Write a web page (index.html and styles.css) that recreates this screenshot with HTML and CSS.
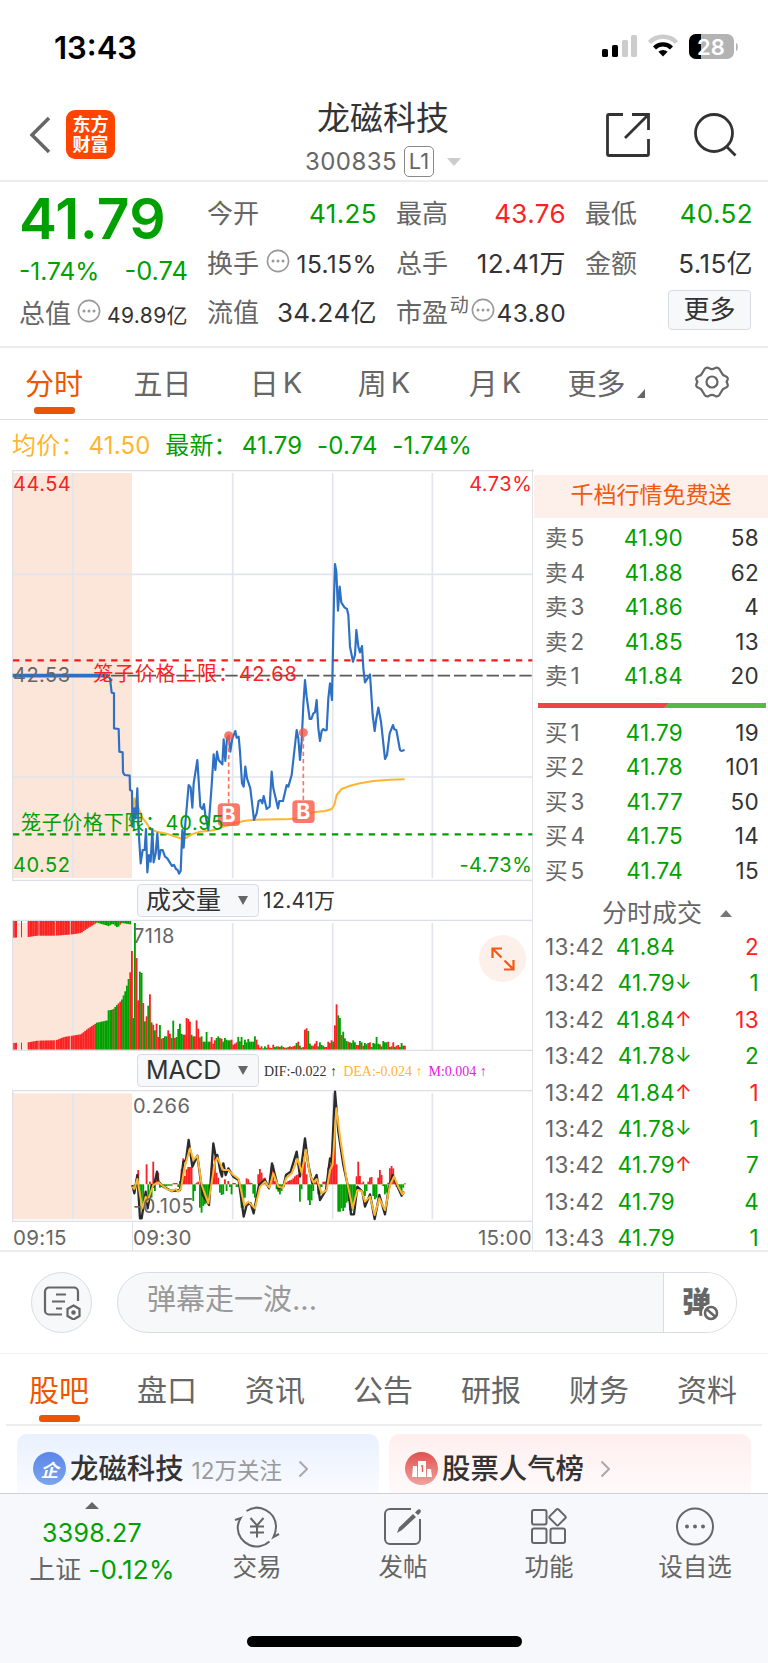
FILE: index.html
```
<!DOCTYPE html>
<html lang="zh-CN">
<head>
  <meta charset="UTF-8">
  <meta name="viewport" content="width=device-width, initial-scale=1.0">
  <title>龙磁科技 300835</title>
  <link rel="stylesheet" href="styles.css">
</head>
<body>
  <!-- Status bar -->
  <div class="status-bar">
    <span class="clock">13:43</span>
    <svg class="status-icons" width="138" height="26" viewBox="0 0 138 26">
      <rect x="2" y="15" width="6" height="8" rx="1.6"/>
      <rect x="12" y="11" width="6" height="12" rx="1.6"/>
      <rect x="22" y="6" width="6" height="17" rx="1.6" fill="#ccc"/>
      <rect x="31" y="1" width="6" height="22" rx="1.6" fill="#ccc"/>
      <path d="M49.500 8.500a19 19 0 0 1 27 0" fill="none" stroke="#ccc" stroke-width="4.500"/>
      <path d="M54.500 14a12 12 0 0 1 17 0" fill="none" stroke="#000" stroke-width="4.200"/>
      <path d="M63 22.500l-4.600-4.700a6.600 6.600 0 0 1 9.200 0z"/>
      <rect x="89" y="0" width="45" height="25" rx="7" fill="#b3b3b3"/>
      <path d="M96 0h5v25h-5a7 7 0 0 1-7-7V7a7 7 0 0 1 7-7z"/>
      <path d="M136 9v8c2.500-1 2.500-7 0-8z" fill="#b3b3b3"/>
      <text x="111" y="20.500" text-anchor="middle" class="battery-text">28</text>
    </svg>
  </div>

  <header class="navbar">
    <div class="nav-left">
      <svg width="24" height="38" viewBox="0 0 24 38" fill="none" stroke="#666" stroke-width="3.500"><path d="M21 2L4 19l17 17"/></svg>
      <div class="app-logo"><span>东方</span><span>财富</span></div>
    </div>
    <div class="stock-title">
      <h1>龙磁科技</h1>
      <p><span>300835</span><span class="level">L1</span><i class="caret-down"></i></p>
    </div>
    <div class="nav-right">
      <svg width="46" height="46" viewBox="0 0 46 46" fill="none" stroke="#333" stroke-width="2.800">
        <path d="M18 2.500H4a1.500 1.500 0 0 0-1.500 1.500v38A1.500 1.500 0 0 0 4 43.500h38a1.500 1.500 0 0 0 1.500-1.500V27M27 2.500h16.500V18M43 3L20 26"/>
      </svg>
      <svg width="46" height="46" viewBox="0 0 46 46" fill="none" stroke="#333" stroke-width="2.800">
        <circle cx="22" cy="21" r="18.500"/><path d="M34.500 34.500l9 9"/>
      </svg>
    </div>
  </header>

  <!-- Quote summary -->
  <section class="quote">
    <div class="main-price">
      <strong>41.79</strong>
      <div class="change"><span>-1.74%</span><span>-0.74</span></div>
      <div class="cell small"><label>总值</label><svg class="dots"><use href="#dots"/></svg><b>49.89亿</b></div>
    </div>
    <div class="col">
      <div class="cell"><label>今开</label><b class="green">41.25</b></div>
      <div class="cell mid"><label>换手</label><svg class="dots"><use href="#dots"/></svg><b>15.15%</b></div>
      <div class="cell"><label>流值</label><b>34.24亿</b></div>
    </div>
    <div class="col">
      <div class="cell"><label>最高</label><b class="red">43.76</b></div>
      <div class="cell"><label>总手</label><b>12.41万</b></div>
      <div class="cell mid"><label>市盈</label><em>动</em><svg class="dots"><use href="#dots"/></svg><b>43.80</b></div>
    </div>
    <div class="col">
      <div class="cell"><label>最低</label><b class="green">40.52</b></div>
      <div class="cell"><label>金额</label><b>5.15亿</b></div>
      <div class="more-wrap"><button class="more-btn">更多</button></div>
    </div>
  </section>

  <svg class="defs">
    <symbol id="dots" viewBox="0 0 24 24">
      <circle cx="12" cy="12" r="10.600" fill="none" stroke="#999" stroke-width="1.600"/>
      <circle cx="7" cy="12" r="1.500" fill="#999"/><circle cx="12" cy="12" r="1.500" fill="#999"/><circle cx="17" cy="12" r="1.500" fill="#999"/>
    </symbol>
  </svg>

  <nav class="period-tabs">
    <a class="active">分时</a>
    <a>五日</a>
    <a>日<span>K</span></a>
    <a>周<span>K</span></a>
    <a>月<span>K</span></a>
    <a class="more">更多<i></i></a>
    <a><svg width="36" height="34" viewBox="0 0 36 34" fill="none" stroke="#666" stroke-width="2.200" stroke-linejoin="round">
      <path d="M10.500 4.200Q12.500 1.500 15 3.200Q18 5.200 21 3.200Q23.500 1.500 25.500 4.200L27.400 7.500Q28.500 10.300 31.500 11.200Q34.600 12.300 33.500 15L32.600 17L33.500 19Q34.600 21.700 31.500 22.800Q28.500 23.700 27.400 26.500L25.500 29.800Q23.500 32.500 21 30.800Q18 28.800 15 30.800Q12.500 32.500 10.500 29.800L8.600 26.500Q7.500 23.700 4.500 22.800Q1.400 21.700 2.500 19L3.400 17L2.500 15Q1.400 12.300 4.500 11.200Q7.500 10.300 8.600 7.500Z"/>
      <circle cx="18" cy="17" r="5.500"/></svg></a>
  </nav>

  <div class="price-info">
    <span class="avg">均价：<b>41.50</b></span><span>最新：<b>41.79</b></span><span>-0.74</span><span>-1.74%</span>
  </div>

  <main class="market">
    <div class="charts">
      <!-- Intraday price -->
      <svg class="price-chart" viewBox="36 12 1566 1236">
        <rect x="39" y="24" width="357" height="1215" fill="#fce6da"/>
        <g class="grid">
          <path d="M218 24V1239M698 24V1239M998 24V1239M1297 24V1239M38 328H1597M38 936H1597"/>
          <path class="frame" d="M38 1248V17H1602M38 1246H1597"/>
        </g>
        <path d="M39 586H1597" stroke="#f01e1e" stroke-width="6.500" stroke-dasharray="19 17.800"/>
        <path d="M39 632H1597" stroke="#5a5a5a" stroke-width="5.500" stroke-dasharray="37 12"/>
        <path d="M39 1108H1597" stroke="#00a000" stroke-width="6.500" stroke-dasharray="19 17.800"/>
        <polyline class="avg-line" points="397,1085 403,1000 412,1020 427,1058 440,1075 450,1092 470,1100 500,1106 525,1115 545,1121 560,1118 575,1108 600,1100 640,1096 680,1082 730,1068 765,1064 870,1062 900,1060 920,1048 940,1042 975,1038 995,1032 1003,1020 1010,990 1025,972 1045,964 1080,955 1120,948 1170,944 1214,943"/>
        <path d="M38 632H325" stroke="#2d70c4" stroke-width="11"/>
        <polyline class="price-line" points="320,632 330,640 335,683 342,685 342,790 356,792 358,860 368,862 369,922 374,930 389,932 390,975 396,978 397,1085 403,1030 407,1060 412,970 416,1100 422,1195 428,1155 434,1155 438,1092 442,1222 447,1170 452,1190 457,1092 461,1192 467,1165 472,1105 477,1182 482,1155 488,1155 495,1175 502,1180 508,1190 516,1203 522,1200 528,1212 533,1215 537,1226 542,1218 547,1095 551,1148 556,1075 566,960 572,968 577,1028 581,955 592,885 601,1025 607,1032 612,1017 616,1050 625,1095 634,975 641,868 646,915 651,860 656,885 667,898 671,823 676,888 681,820 686,812 691,860 697,820 706,798 710,818 716,815 720,860 726,955 731,965 736,905 741,940 751,970 762,1065 770,1045 776,1008 782,1005 787,1015 791,993 800,1032 809,1025 815,920 820,970 834,1030 838,1008 849,1008 860,960 865,965 875,930 890,795 895,820 900,885 905,830 910,720 915,645 920,695 929,762 934,762 940,745 945,742 950,705 955,790 960,828 965,798 970,792 975,796 980,795 985,700 990,655 996,705 998,600 1002,400 1005,297 1009,320 1014,437 1019,365 1024,413 1034,428 1041,432 1045,450 1050,545 1059,590 1065,570 1069,495 1075,545 1080,562 1086,543 1090,610 1095,652 1110,628 1118,750 1124,798 1129,760 1135,728 1143,770 1155,882 1161,870 1169,805 1179,780 1183,793 1189,795 1200,855 1204,858 1214,855"/>
        <g class="marker">
          <path d="M686 826V1016M910 816V1006"/>
          <circle cx="686" cy="812" r="13.500"/><circle cx="910" cy="803" r="13.500"/>
          <rect x="653" y="1015" width="67" height="68" rx="12"/><rect x="877" y="1006" width="67" height="68" rx="12"/>
          <text x="686" y="1072">B</text><text x="910" y="1062">B</text>
        </g>
        <g class="chart-text">
          <text class="t-red" x="39" y="78">44.54</text>
          <text class="t-red" x="1597" y="78" text-anchor="end">4.73%</text>
          <text x="39" y="651">42.53</text>
          <text class="t-red" x="280" y="648" textLength="612">笼子价格上限：42.68</text>
          <text class="t-green" x="63" y="1095" textLength="609">笼子价格下限：40.95</text>
          <text class="t-green" x="39" y="1222">40.52</text>
          <text class="t-green" x="1597" y="1222" text-anchor="end">-4.73%</text>
        </g>
      </svg>

      <div class="chart-bar">
        <button class="select">成交量<i></i></button>
        <span class="volume-total">12.41万</span>
      </div>

      <!-- Volume -->
      <div class="volume-wrap">
        <svg class="sub-chart" viewBox="36 132 1566 396">
          <rect x="39" y="144" width="357" height="380" fill="#fce6da"/>
          <g class="grid"><path d="M218 144V524M698 144V524M998 144V524M1297 144V524"/></g>
          <g id="auction"></g>
          <g id="volume"></g>
          <g class="grid"><path class="frame" d="M38 528V136H1597M38 526H1597"/></g>
          <g class="chart-text"><text x="399" y="203">7118</text></g>
        </svg>
        <button class="expand">
          <svg width="24" height="24" viewBox="0 0 24 24" fill="none" stroke="#f05a10" stroke-width="2.200"><path d="M11 1.500H1.500V11M1.500 1.500l9 9M13 22.500h9.500V13M22.500 22.500l-9-9"/></svg>
        </button>
      </div>

      <div class="chart-bar">
        <button class="select">MACD<i></i></button>
        <div class="macd-values"><span>DIF:-0.022 ↑</span><span>DEA:-0.024 ↑</span><span>M:0.004 ↑</span></div>
      </div>

      <!-- MACD -->
      <svg class="sub-chart" viewBox="36 645 1566 396">
        <rect x="39" y="655" width="357" height="378" fill="#fce6da"/>
        <g class="grid"><path d="M218 655V1033M698 655V1033M998 655V1033M1297 655V1033"/><path class="frame" d="M38 1041V647H1597M38 1039H1597"/></g>
        <g id="macd"></g>
        <polyline class="dif-line" points="397,930 403,955 412,900 420,1030 425,1030 437,950 443,1000 455,930 461,935 471,890 475,920 490,935 515,948 540,945 550,860 558,855 566,795 577,875 592,842 608,960 627,990 640,805 648,850 652,840 661,890 666,905 670,865 677,900 685,880 700,905 716,915 731,1025 740,990 752,985 761,1015 777,930 795,915 807,940 816,865 835,940 850,935 858,900 872,890 890,830 900,905 915,790 925,870 937,925 950,900 960,975 978,945 990,850 995,860 1005,650 1015,770 1030,870 1045,940 1053,1018 1062,1018 1072,935 1087,950 1095,995 1110,958 1124,1032 1138,960 1155,1018 1166,940 1178,900 1195,940 1205,962 1212,950"/>
        <polyline class="dea-line" points="397,935 403,942 412,912 427,1000 437,965 442,980 460,930 475,922 500,942 517,948 527,942 535,950 543,940 553,880 570,820 580,855 592,842 605,930 625,985 645,860 652,848 670,885 685,885 700,900 716,912 733,992 745,980 765,1000 780,935 795,920 808,938 820,895 835,935 849,938 858,910 875,895 893,852 905,893 918,825 930,900 940,922 950,912 965,955 980,945 990,885 998,870 1009,700 1022,800 1040,915 1058,1000 1072,945 1085,948 1095,980 1110,965 1124,1020 1138,970 1155,1005 1170,930 1182,905 1197,940 1207,958 1214,950"/>
        <g class="chart-text"><text x="399" y="713">0.266</text><text x="399" y="1015">-0.105</text></g>
      </svg>

      <div class="time-axis"><span>09:15</span><span>09:30</span><span>15:00</span></div>
    </div>

    <!-- Order book -->
    <aside class="book">
      <div class="promo">千档行情免费送</div>
      <ul class="levels">
        <li><span>卖5</span><b>41.90</b><i>58</i></li>
        <li><span>卖4</span><b>41.88</b><i>62</i></li>
        <li><span>卖3</span><b>41.86</b><i>4</i></li>
        <li><span>卖2</span><b>41.85</b><i>13</i></li>
        <li><span>卖1</span><b>41.84</b><i>20</i></li>
      </ul>
      <div class="ratio"></div>
      <ul class="levels">
        <li><span>买1</span><b>41.79</b><i>19</i></li>
        <li><span>买2</span><b>41.78</b><i>101</i></li>
        <li><span>买3</span><b>41.77</b><i>50</i></li>
        <li><span>买4</span><b>41.75</b><i>14</i></li>
        <li><span>买5</span><b>41.74</b><i>15</i></li>
      </ul>
      <div class="deals-title">分时成交<i></i></div>
      <ul class="deals">
        <li><span>13:42</span><b>41.84</b><em></em><i class="red">2</i></li>
        <li><span>13:42</span><b>41.79</b><em>↓</em><i>1</i></li>
        <li><span>13:42</span><b>41.84</b><em class="red">↑</em><i class="red">13</i></li>
        <li><span>13:42</span><b>41.78</b><em>↓</em><i>2</i></li>
        <li><span>13:42</span><b>41.84</b><em class="red">↑</em><i class="red">1</i></li>
        <li><span>13:42</span><b>41.78</b><em>↓</em><i>1</i></li>
        <li><span>13:42</span><b>41.79</b><em class="red">↑</em><i>7</i></li>
        <li><span>13:42</span><b>41.79</b><em></em><i>4</i></li>
        <li><span>13:43</span><b>41.79</b><em></em><i>1</i></li>
      </ul>
    </aside>
  </main>

  <section class="danmaku">
    <button class="round-btn">
      <svg width="38" height="34" viewBox="0 0 38 34" fill="none" stroke="#666" stroke-width="2.200">
        <path d="M19 28.500H6A4 4 0 0 1 2 24.500V5.500A4 4 0 0 1 6 1.500H31A4 4 0 0 1 35 5.500V15M13 8.500H23M9 15.500H22M13 22.500H19"/>
        <path d="M30.500 19.500l6 3.500v7l-6 3.500l-6-3.500v-7z"/><circle cx="30.500" cy="26.500" r="1.200" fill="#666"/>
      </svg>
    </button>
    <div class="danmaku-input">
      <span>弹幕走一波...</span>
      <div class="danmaku-toggle">弹<svg width="18" height="18" viewBox="0 0 18 18"><circle cx="9" cy="9" r="6.500" fill="#fff" stroke="#fff" stroke-width="5"/><circle cx="9" cy="9" r="6" fill="#fff" stroke="#666" stroke-width="2.600"/><path d="M5 5.500l8 7" stroke="#666" stroke-width="2.400"/></svg></div>
    </div>
  </section>

  <nav class="info-tabs">
    <a class="active">股吧</a><a>盘口</a><a>资讯</a><a>公告</a><a>研报</a><a>财务</a><a>资料</a>
  </nav>

  <section class="topics">
    <div class="topic blue">
      <span class="badge">企</span>
      <h2>龙磁科技</h2><small>12万关注</small>
      <svg class="chevron" width="10" height="18" viewBox="0 0 10 18"><path d="M1.500 1.500L9 9L1.500 16.500"/></svg>
    </div>
    <div class="topic pink">
      <span class="badge"><svg width="20" height="18" viewBox="0 0 20 18"><path fill="#fff" d="M1 6h4v11H0zM6 1h8v16H6zM15 9h4l1 8h-5z"/><path d="M9 6h1.500v6" fill="none" stroke="#dd6560" stroke-width="1.500"/></svg></span>
      <h2>股票人气榜</h2>
      <svg class="chevron" width="10" height="18" viewBox="0 0 10 18"><path d="M1.500 1.500L9 9L1.500 16.500"/></svg>
    </div>
  </section>

  <footer class="bottom-nav">
    <div class="index-box">
      <i></i>
      <b>3398.27</b>
      <p>上证<b>-0.12%</b></p>
    </div>
    <div class="nav-item">
      <svg width="46" height="42" viewBox="0 0 46 42" fill="none" stroke="#666" stroke-width="2">
        <path d="M12.500 5A19 19 0 0 1 42 20.500Q42 26 39.500 31L45 28M35.500 35.500A19 19 0 0 1 3.700 22Q3.700 17 6.700 12L1 14"/>
        <path d="M16.500 12l6.500 7.500 6.500-7.500M16 20.500h14M16 26.500h14M23 19.500v12"/>
      </svg>
      <span>交易</span>
    </div>
    <div class="nav-item">
      <svg width="42" height="42" viewBox="0 0 42 42" fill="none" stroke="#666" stroke-width="2">
        <path d="M29 3H8a5 5 0 0 0-5 5V33a5 5 0 0 0 5 5H33a5 5 0 0 0 5-5V13"/>
        <path d="M15 27l2-5.500L31 8l3 3L20 24z M33 6.500q4-5 5.500-2.500t-2.500 5z" fill="#666" stroke="none"/>
      </svg>
      <span>发帖</span>
    </div>
    <div class="nav-item">
      <svg width="42" height="42" viewBox="0 0 42 42" fill="none" stroke="#666" stroke-width="2">
        <rect x="4" y="4" width="14.500" height="14.500" rx="2"/><rect x="4" y="22.500" width="14.500" height="14.500" rx="2"/><rect x="22.500" y="22.500" width="14.500" height="14.500" rx="2"/>
        <rect x="23.300" y="5" width="12.400" height="12.400" rx="1.500" transform="rotate(45 29.500 11.200)"/>
      </svg>
      <span>功能</span>
    </div>
    <div class="nav-item">
      <svg width="42" height="42" viewBox="0 0 42 42"><circle cx="21" cy="20.500" r="18" fill="none" stroke="#666" stroke-width="2"/><g fill="#666"><circle cx="13" cy="20.500" r="2"/><circle cx="21" cy="20.500" r="2"/><circle cx="29" cy="20.500" r="2"/></g></svg>
      <span>设自选</span>
    </div>
    <div class="home-bar"></div>
  </footer>

  <script>
    const RED = "#fa2222";
    const GREEN = "#00a000";
    const START = 397;
    const STEP = 5;

    // positive = up (red), negative = down (green)
    const volume = [
      -95, -380, 275, 148, -234, -230, 140, -85, 100, -132, 166, -82, 75, -58, 78, 38, -74, 33, 35, -40,
      -40, 58, 48, -35, -87, 35, -38, -62, -78, -48, -45, 45, 95, 92, 84, -45, -40, 40, 88, 63,
      37, -40, 24, -24, -53, -24, 24, 38, 18, 28, -35, -40, 35, 33, -24, -35, -30, -28, -28, 30,
      15, 18, 22, -38, -25, -38, 14, -30, -22, -32, -24, -24, -24, -40, 30, 15, 6, 10, -4, -10,
      -6, 15, 6, 5, 15, -8, -10, 10, -8, -12, 8, 6, -6, 8, 10, -8, 10, 12, -20, 24,
      -12, -6, 8, 60, 64, -56, -18, -12, 12, 18, 26, -10, -22, -14, -12, 8, 8, 24, 20, 28,
      -24, 73, 136, -103, -95, 44, -54, -34, -26, 24, -22, -20, -28, -22, 14, 14, -26, -22, 12, -20,
      -16, 20, 22, -8, -20, -18, -38, -18, 16, -10, -26, -22, -22, 24, -8, 10, 22, -8, 12, 14,
      -8, -20, -12, 12
    ];

    const macd = [
      0, -12, 15, 43, -40, -75, -60, 0, 60, -40, 8, -40, 68, -20, 20, 35, -10, -8, -8, -6,
      -6, -4, -4, -4, 3, 4, 4, -8, 10, 45, 78, 25, 45, 52, 52, 52, -50, -20, 5, 8,
      -70, -85, -65, -60, -50, -45, -20, 50, 60, 80, 35, 20, -25, -32, -30, 15, -20, 10, -8, -30,
      4, 4, -8, -8, -20, -70, -70, -40, 18, 15, 5, 4, -28, -40, 0, 30, 46, 35, 18, 20,
      -4, -6, 5, 50, 58, 10, -15, -22, -30, -20, -8, 4, 6, 10, 12, 14, 18, 24, 28, 30,
      -52, -15, 70, 68, 30, -48, -62, -48, -20, 6, 10, -30, -28, -8, 8, 8, 10, 50, 60, 90,
      120, 168, 60, -82, -82, -72, -80, -70, -55, -50, -78, -80, -60, -40, 24, 68, 25, 3, 8, -35,
      -20, 8, 20, 22, -35, -45, -40, 20, 43, 28, -5, -30, -25, 5, 48, 55, 48, 20, -8, -15,
      -25, -22, -10, 3
    ];

    function bar(x, y, w, h, color) {
      return `<rect x="${x}" y="${y}" width="${w}" height="${h}" fill="${color}"/>`;
    }

    function drawBars(id, data, base, signed) {
      document.getElementById(id).innerHTML = data.map((v, i) => {
        const h = Math.abs(v);
        const y = signed && v < 0 ? base : base - h;
        return bar(START + i * STEP, y, STEP + 0.5, h, v > 0 ? RED : GREEN);
      }).join("");
    }

    // Call auction: [x, matched height, unmatched depth]
    const auctionShape = [
      [38, 20, 50], [82, 22, 48], [110, 27, 44], [165, 28, 44], [190, 38, 42], [215, 42, 40], [240, 46, 36],
      [260, 62, 22], [275, 72, 13], [288, 81, 5], [320, 88, 14], [322, 118, 16], [336, 120, 8], [350, 136, 20],
      [362, 148, 6], [375, 180, 8], [388, 232, 10], [392, 296, 0]
    ];

    function drawAuction() {
      const holes = [53, 58, 68, 73, 78];
      let html = "";
      for (let x = 38; x < 396; x += 5) {
        if (holes.includes(x)) continue;
        const k = auctionShape.findIndex(p => p[0] > x);
        const a = auctionShape[(k < 0 ? auctionShape.length : k) - 1];
        const b = k < 0 ? a : auctionShape[k];
        const t = b === a ? 0 : (x - a[0]) / (b[0] - a[0]);
        const h = a[1] + (b[1] - a[1]) * t;
        const d = a[2] + (b[2] - a[2]) * t;
        const up = x < 288 || x === 338 || x === 353 || x === 358 || x > 386;
        const w = [48, 63, 113, 163, 208].includes(x) ? 3 : 5.5;
        html += bar(x, 524 - h, w, h, up ? RED : GREEN);
        html += bar(x, 138, w, d, x < 288 || x === 358 ? RED : GREEN);
      }
      document.getElementById("auction").innerHTML = html;
    }

    drawAuction();
    drawBars("volume", volume, 524, false);
    drawBars("macd", macd, 928, true);
  </script>
</body>
</html>
```
FILE: styles.css
```
* {
  box-sizing: border-box;
}

body {
  margin: 0;
  width: 768px;
  height: 1663px;
  overflow: hidden;
  display: flex;
  flex-direction: column;
  background: #fff;
  color: #333;
  font-family: Inter, "Noto Sans CJK SC", sans-serif;
}

h1, h2, p, ul {
  margin: 0;
  padding: 0;
  font-weight: 400;
}

ul {
  list-style: none;
}

b, i, em {
  font-weight: 400;
  font-style: normal;
}

button {
  padding: 0;
  font-family: inherit;
  color: #333;
  border: 1px solid #d9dce3;
  background: #f7f8fa;
}

.red { color: #fa2222 !important; }
.green { color: #00a000; }

.defs {
  position: absolute;
  width: 0;
  height: 0;
}

/* Status bar */
.status-bar {
  height: 90px;
  padding: 4px 30px 0 54px;
  display: flex;
  justify-content: space-between;
  align-items: center;
  flex-shrink: 0;
}

.clock {
  font-size: 31px;
  font-weight: 600;
  color: #000;
}

.battery-text {
  font-size: 22px;
  font-weight: 600;
  fill: #fff;
}

/* Navbar */
.navbar {
  height: 92px;
  flex-shrink: 0;
  display: flex;
  justify-content: space-between;
  border-bottom: 2px solid #ededed;
  padding: 0 30px 0 28px;
}

.nav-left {
  width: 150px;
  display: flex;
  gap: 14px;
  padding-top: 20px;
}

.nav-left svg {
  margin-top: 6px;
}

.app-logo {
  width: 49px;
  height: 49px;
  border-radius: 9px;
  background: #ff4400;
  color: #fff;
  display: flex;
  flex-direction: column;
  align-items: center;
  padding-top: 5px;
  font-size: 18px;
  font-weight: 700;
  line-height: 20px;
}

.stock-title {
  text-align: center;
}

.stock-title h1 {
  font-size: 33px;
  line-height: 56px;
}

.stock-title p {
  display: flex;
  align-items: center;
  justify-content: center;
  height: 31px;
  font-size: 24px;
  letter-spacing: 0.4px;
  color: #666;
}

.level {
  margin-left: 7px;
  width: 30px;
  height: 31px;
  line-height: 29px;
  border: 1.5px solid #888;
  border-radius: 5px;
  font-size: 22px;
  letter-spacing: 0;
}

.caret-down {
  margin-left: 13px;
  border: 7px solid transparent;
  border-top: 8px solid #ccc;
  border-bottom: 0;
}

.nav-right {
  width: 150px;
  display: flex;
  justify-content: flex-end;
  gap: 41px;
  padding-top: 22px;
}

/* Quote */
.quote {
  height: 166px;
  flex-shrink: 0;
  display: grid;
  grid-template-columns: 169px 170px 170px 168px;
  column-gap: 19px;
  padding: 9px 0 0 19px;
  border-bottom: 2px solid #ededed;
}

.main-price strong {
  display: block;
  height: 54px;
  line-height: 55px;
  font-size: 57px;
  font-weight: 600;
  letter-spacing: 0.2px;
  color: #00a000;
}

.change {
  display: flex;
  justify-content: space-between;
  height: 46px;
  line-height: 52px;
  font-size: 24.5px;
  color: #00a000;
}

.change span:last-child {
  font-size: 25.5px;
}

.cell {
  display: flex;
  align-items: baseline;
  justify-content: space-between;
  height: 49.5px;
  line-height: 46px;
  font-size: 26px;
}

.cell label {
  color: #666;
}

.cell b {
  letter-spacing: 0.4px;
}

.cell.mid b {
  font-size: 24.5px;
}

.cell.small b {
  font-size: 21px;
}

.dots {
  width: 24px;
  height: 24px;
  margin: 0 0 5px 0;
  flex-shrink: 0;
}

.cell em {
  font-size: 19px;
  color: #666;
  position: relative;
  top: -10px;
}

.more-wrap {
  display: flex;
  justify-content: flex-end;
  padding-right: 2px;
}

.more-btn {
  width: 83px;
  height: 40px;
  font-size: 26px;
  line-height: 34px;
  border-radius: 4px;
}

/* Period tabs */
.period-tabs {
  height: 72px;
  flex-shrink: 0;
  display: grid;
  grid-template-columns: 108px 109px 118px 98px 124px 98px 114px;
  border-bottom: 1.5px solid #dcdde0;
}

.period-tabs a {
  display: flex;
  justify-content: center;
  align-items: center;
  position: relative;
  padding-bottom: 3px;
  font-size: 29px;
  color: #666;
}

.period-tabs a span {
  margin-left: 4px;
}

.period-tabs a.more {
  gap: 11px;
}

.period-tabs a.more i {
  align-self: flex-end;
  margin-bottom: 18px;
  border-left: 8px solid transparent;
  border-bottom: 9px solid #666;
}

.period-tabs a.active,
.info-tabs a.active {
  color: #f05500;
}

.period-tabs .active::after,
.info-tabs .active::after {
  content: "";
  position: absolute;
  left: 50%;
  bottom: 5px;
  width: 41px;
  height: 7px;
  margin-left: -20px;
  border-radius: 3px;
  background: #ea5504;
}

/* Price info */
.price-info {
  height: 49px;
  flex-shrink: 0;
  display: flex;
  gap: 14.5px;
  padding-left: 12px;
  line-height: 51px;
  font-size: 24px;
  letter-spacing: 0.2px;
  color: #00a000;
}

.price-info b {
  margin-left: 4px;
}

.price-info .avg {
  color: #ffb52e;
}

/* Market area */
.market {
  height: 783px;
  flex-shrink: 0;
  display: flex;
  border-bottom: 2px solid #ededed;
}

.charts {
  width: 521px;
  margin-left: 12px;
  border-right: 1px solid #e0e3ea;
  display: flex;
  flex-direction: column;
}

.charts > svg,
.volume-wrap svg {
  display: block;
}

.price-chart {
  width: 522px;
  height: 412px;
  flex-shrink: 0;
}

.sub-chart {
  width: 522px;
  height: 132px;
  flex-shrink: 0;
}

.grid path {
  fill: none;
  stroke: #e2e5ec;
  stroke-width: 5;
}

.grid .frame {
  stroke: #dddfe6;
  stroke-width: 3.5;
}

.price-line, .avg-line, .dif-line, .dea-line {
  fill: none;
  stroke-width: 6;
  stroke-linejoin: round;
}

.price-line { stroke: #2d70c4; stroke-width: 6.5; }
.avg-line { stroke: #ffb52e; }
.dif-line { stroke: #2b2b2b; stroke-width: 7; }
.dea-line { stroke: #ffb52e; }

.marker path {
  stroke: #ff7464;
  stroke-width: 5;
  stroke-dasharray: 13 9;
}

.marker circle,
.marker rect {
  fill: #fa5746;
  fill-opacity: 0.8;
}

.marker text {
  fill: #fff;
  font-size: 64px;
  font-weight: 700;
  text-anchor: middle;
}

.chart-text text {
  font-size: 60px;
  letter-spacing: 1.5px;
  fill: #666;
}

.chart-text .t-red { fill: #fa2222; }
.chart-text .t-green { fill: #00a000; }

.chart-bar {
  height: 38px;
  flex-shrink: 0;
  display: flex;
  align-items: center;
  padding-left: 125px;
}

.chart-bar + .sub-chart {
  margin-top: 1px;
}

.select {
  width: 122px;
  height: 33px;
  border-radius: 4px;
  font-size: 25px;
  line-height: 30px;
  display: flex;
  align-items: center;
  justify-content: space-between;
  padding: 0 10px 0 8px;
}

.select i {
  border: 5px solid transparent;
  border-top: 9px solid #666;
  border-bottom: 0;
}

.volume-total {
  margin: -2px 0 0 4px;
  font-size: 21px;
  letter-spacing: 0.4px;
}

.macd-values {
  display: flex;
  gap: 6px;
  margin: 3px 0 0 5px;
  font-family: "Liberation Serif", serif;
  font-size: 14px;
}

.macd-values span:nth-child(2) { color: #ffb52e; }
.macd-values span:nth-child(3) { color: #e619e6; }

.volume-wrap {
  position: relative;
}

.expand {
  position: absolute;
  right: 6px;
  top: 16px;
  width: 47px;
  height: 47px;
  border: 0;
  border-radius: 50%;
  background: #fdf0ea;
  display: flex;
  align-items: center;
  justify-content: center;
}

.time-axis {
  height: 29px;
  display: flex;
  font-size: 20.5px;
  letter-spacing: 0.3px;
  line-height: 32px;
  color: #666;
}

.time-axis span:first-child {
  width: 120px;
  padding-left: 1px;
}

.time-axis span:nth-child(2) {
  border-left: 1px solid #e0e3ea;
}

.time-axis span:last-child {
  margin-left: auto;
}

/* Order book */
.book {
  width: 235px;
  padding-top: 6px;
}

.promo {
  height: 43px;
  margin-left: 1px;
  background: #fdf0ea;
  color: #f05a10;
  font-size: 23px;
  line-height: 40px;
  text-align: center;
}

.levels li,
.deals li {
  display: flex;
  padding: 0 9px 0 12px;
  height: 34.5px;
  line-height: 35px;
  font-size: 22.5px;
  letter-spacing: 0.3px;
}

.levels {
  padding-top: 2px;
}

.levels span {
  width: 67px;
  color: #666;
  letter-spacing: 3px;
}

.levels b {
  width: 71px;
  text-align: right;
  color: #00a000;
}

.levels i,
.deals i {
  margin-left: auto;
}

.ratio {
  height: 5px;
  margin: 10px 2px 5px 5px;
  background: linear-gradient(135deg, #ee4646 0 56%, #56b946 56%);
}

.deals-title {
  height: 36px;
  margin-top: 6px;
  padding-left: 69px;
  display: flex;
  align-items: center;
  font-size: 25px;
  color: #666;
}

.deals-title i {
  margin: 4px 0 0 18px;
  border: 6px solid transparent;
  border-bottom: 7px solid #777;
  border-top: 0;
}

.deals li {
  height: 36.4px;
  color: #00a000;
}

.deals span {
  width: 61px;
  color: #666;
}

.deals b {
  width: 69px;
  text-align: right;
}

.deals em {
  font-size: 20px;
}

/* Danmaku */
.danmaku {
  height: 102px;
  flex-shrink: 0;
  display: flex;
  align-items: center;
  gap: 25px;
  padding: 0 31px;
  border-bottom: 1px solid #f0f0f0;
}

.round-btn {
  width: 61px;
  height: 61px;
  border-radius: 50%;
  display: flex;
  align-items: center;
  justify-content: center;
}

.danmaku-input {
  width: 620px;
  height: 61px;
  display: flex;
  justify-content: space-between;
  overflow: hidden;
  border: 1px solid #d9dce3;
  border-radius: 31px;
  background: #f7f8fa;
  font-size: 29px;
  line-height: 54px;
  color: #999;
  padding-left: 29px;
}

.danmaku-toggle {
  position: relative;
  width: 73px;
  padding-left: 18px;
  border-left: 1px solid #d9dce3;
  background: #fff;
  color: #666;
  font-weight: 900;
  line-height: 59px;
}

.danmaku-toggle svg {
  position: absolute;
  left: 38px;
  top: 31px;
}

/* Info tabs */
.info-tabs {
  height: 72px;
  flex-shrink: 0;
  margin: 0 6px;
  display: grid;
  grid-template-columns: repeat(7, 108px);
  border-bottom: 2px solid #ededed;
}

.info-tabs a {
  position: relative;
  left: -1px;
  text-align: center;
  font-size: 30px;
  line-height: 72px;
  color: #666;
}

.info-tabs .active::after {
  bottom: 4px;
}

/* Topics */
.topics {
  height: 67px;
  flex-shrink: 0;
  display: flex;
  gap: 10px;
  padding: 8px 17px 0;
}

.topic {
  flex: 1;
  display: flex;
  align-items: center;
  padding: 10px 0 0 16px;
  border-radius: 10px 10px 0 0;
}

.topic.blue { background: linear-gradient(#eaf1fe, #f9fbff); }
.topic.pink { background: linear-gradient(#ffefef, #fffafa); }

.topic h2 {
  margin-left: 4px;
  font-size: 28.4px;
  font-weight: 500;
  line-height: 40px;
}

.topic small {
  margin-left: 8px;
  font-size: 22.5px;
  color: #999;
}

.badge {
  width: 33px;
  height: 33px;
  border-radius: 50%;
  display: flex;
  align-items: center;
  justify-content: center;
  color: #fff;
  font-size: 18px;
  font-weight: 700;
}

.badge svg {
  display: block;
}

.blue .badge { background: linear-gradient(#5b86ea, #7ba4ee); font-style: italic; }
.pink .badge { background: linear-gradient(#dc5450, #f2a19c); }

.chevron {
  margin-left: 16px;
  fill: none;
  stroke: #aaa;
  stroke-width: 2;
}

/* Bottom nav */
.bottom-nav {
  flex: 1;
  position: relative;
  display: flex;
  border-top: 1px solid #cdd0d6;
  background: #f7f8fb;
}

.index-box {
  width: 184px;
  display: flex;
  flex-direction: column;
  align-items: center;
  padding-top: 8px;
}

.index-box i {
  border: 7px solid transparent;
  border-bottom: 7px solid #666;
  border-top: 0;
}

.index-box b {
  font-size: 25px;
  line-height: 48px;
  letter-spacing: 0.3px;
  color: #00a000;
}

.index-box p {
  height: 38px;
  margin: -11px 0 0 20px;
  font-size: 26px;
  line-height: 38px;
  color: #666;
}

.index-box p b {
  margin-left: 7px;
  font-size: 26px;
}

.nav-item {
  width: 146px;
  display: flex;
  flex-direction: column;
  align-items: center;
  padding-top: 12px;
  font-size: 24.5px;
  color: #666;
}

.nav-item span {
  line-height: 38px;
}

.home-bar {
  position: absolute;
  left: 247px;
  bottom: 16px;
  width: 275px;
  height: 11px;
  border-radius: 6px;
  background: #000;
}
```
